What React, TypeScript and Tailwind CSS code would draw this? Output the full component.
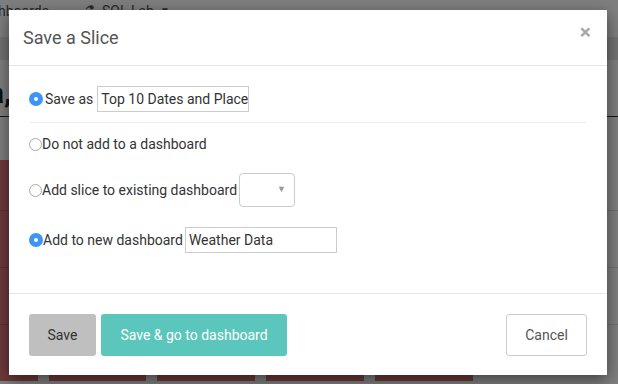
import React from "react";

const Radio = ({ checked }: { checked?: boolean }) =>
    checked ? (
        <span className="w-[14px] h-[14px] rounded-full bg-[#3d95f7] flex items-center justify-center shrink-0">
            <span className="w-[4px] h-[4px] rounded-full bg-white" />
        </span>
    ) : (
        <span className="w-[13px] h-[13px] rounded-full border border-[#a9a9a9] bg-white shrink-0" />
    );

// chart behind the backdrop, mostly hidden by the modal
const Chart = () => (
    <svg width="618" height="264" className="block">
        <rect x="-60" y="43" width="98" height="221" fill="#dc7476" />
        <rect x="49" y="80" width="97" height="184" fill="#dc7476" />
        <rect x="157" y="100" width="98" height="164" fill="#dc7476" />
        <rect x="266" y="120" width="98" height="144" fill="#dc7476" />
        <rect x="375" y="258" width="98" height="6" fill="#dc7476" />
        <line x1="0" y1="93.5" x2="618" y2="93.5" stroke="#000" strokeOpacity="0.12" />
        <line x1="0" y1="150.5" x2="618" y2="150.5" stroke="#000" strokeOpacity="0.12" />
        <line x1="0" y1="207.5" x2="618" y2="207.5" stroke="#000" strokeOpacity="0.12" />
    </svg>
);

const App = () => {
    return (
        <div className="relative w-[618px] h-[384px] overflow-hidden bg-white font-['Roboto',sans-serif]">
            {/* page under the modal */}
            <div className="flex flex-col">
                <div className="h-[37px] flex items-start pt-[1px] text-[14px] text-[#555]">
                    <span className="ml-[-26px]">Dashboards</span>
                    <span className="ml-[36px] text-[12px]">⚗</span>
                    <span className="ml-[6px]">SQL Lab</span>
                    <span className="ml-[6px] text-[10px] mt-[2px]">▼</span>
                </div>
                <div className="h-[23px] bg-[#e4e4e4]" />
                <div className="h-[57px] flex items-center border-b border-[#333] text-[30px] font-bold text-[#222] pt-[8px]">
                    <span className="ml-[-20px]">la,</span>
                </div>
                <Chart />
            </div>

            {/* backdrop */}
            <div className="absolute inset-0 bg-black/50 flex items-start">
                <div className="ml-[9px] mt-[10px] w-[598px] bg-white shadow-[0_5px_15px_rgba(0,0,0,0.5)] flex flex-col text-[14px] text-[#333]">
                    {/* header */}
                    <div className="h-[56px] border-b border-[#e5e5e5] flex items-center justify-between pl-[14px] pr-[16px]">
                        <h4 className="text-[18px] text-[#555] font-normal">Save a Slice</h4>
                        <span className="text-[21px] font-bold leading-none text-[#a8a8a8] self-start mt-[12px]">×</span>
                    </div>

                    {/* body */}
                    <div className="px-[20px] pt-[20px] pb-[40px] flex flex-col">
                        <div className="h-[26px] flex items-center">
                            <Radio checked />
                            <span className="ml-[2px]">Save as</span>
                            <div className="ml-[4px] w-[152px] h-[26px] border border-[#ccc] px-[3px] flex items-center whitespace-nowrap overflow-hidden">
                                Top 10 Dates and Place
                            </div>
                        </div>
                        <div className="mt-[10px] border-t border-[#eee]" />
                        <div className="mt-[11px] h-[20px] flex items-center">
                            <Radio />
                            <span>Do not add to a dashboard</span>
                        </div>
                        <div className="mt-[19px] h-[34px] flex items-center">
                            <Radio />
                            <span>Add slice to existing dashboard</span>
                            <div className="ml-[2px] w-[56px] h-[34px] rounded-[4px] border border-[#ccc] flex items-center justify-end pr-[8px] text-[9px] text-[#999]">
                                ▼
                            </div>
                        </div>
                        <div className="mt-[20px] h-[26px] flex items-center">
                            <Radio checked />
                            <span>Add to new dashboard</span>
                            <div className="ml-[2px] w-[152px] h-[26px] border border-[#ccc] px-[3px] flex items-center whitespace-nowrap">
                                Weather Data
                            </div>
                        </div>
                    </div>

                    {/* footer */}
                    <div className="border-t border-[#e5e5e5] px-[20px] pt-[20px] pb-[19px] flex items-center justify-between">
                        <div className="flex items-center gap-[5px]">
                            <button className="w-[67px] h-[42px] rounded-[3px] bg-[#bfbfbf] text-[#333]">Save</button>
                            <button className="w-[186px] h-[42px] rounded-[3px] bg-[#5bc6bb] text-white">Save &amp; go to dashboard</button>
                        </div>
                        <button className="w-[81px] h-[42px] rounded-[3px] border border-[#ccc] bg-white text-[#555]">Cancel</button>
                    </div>
                </div>
            </div>
        </div>
    );
};

export default App;
